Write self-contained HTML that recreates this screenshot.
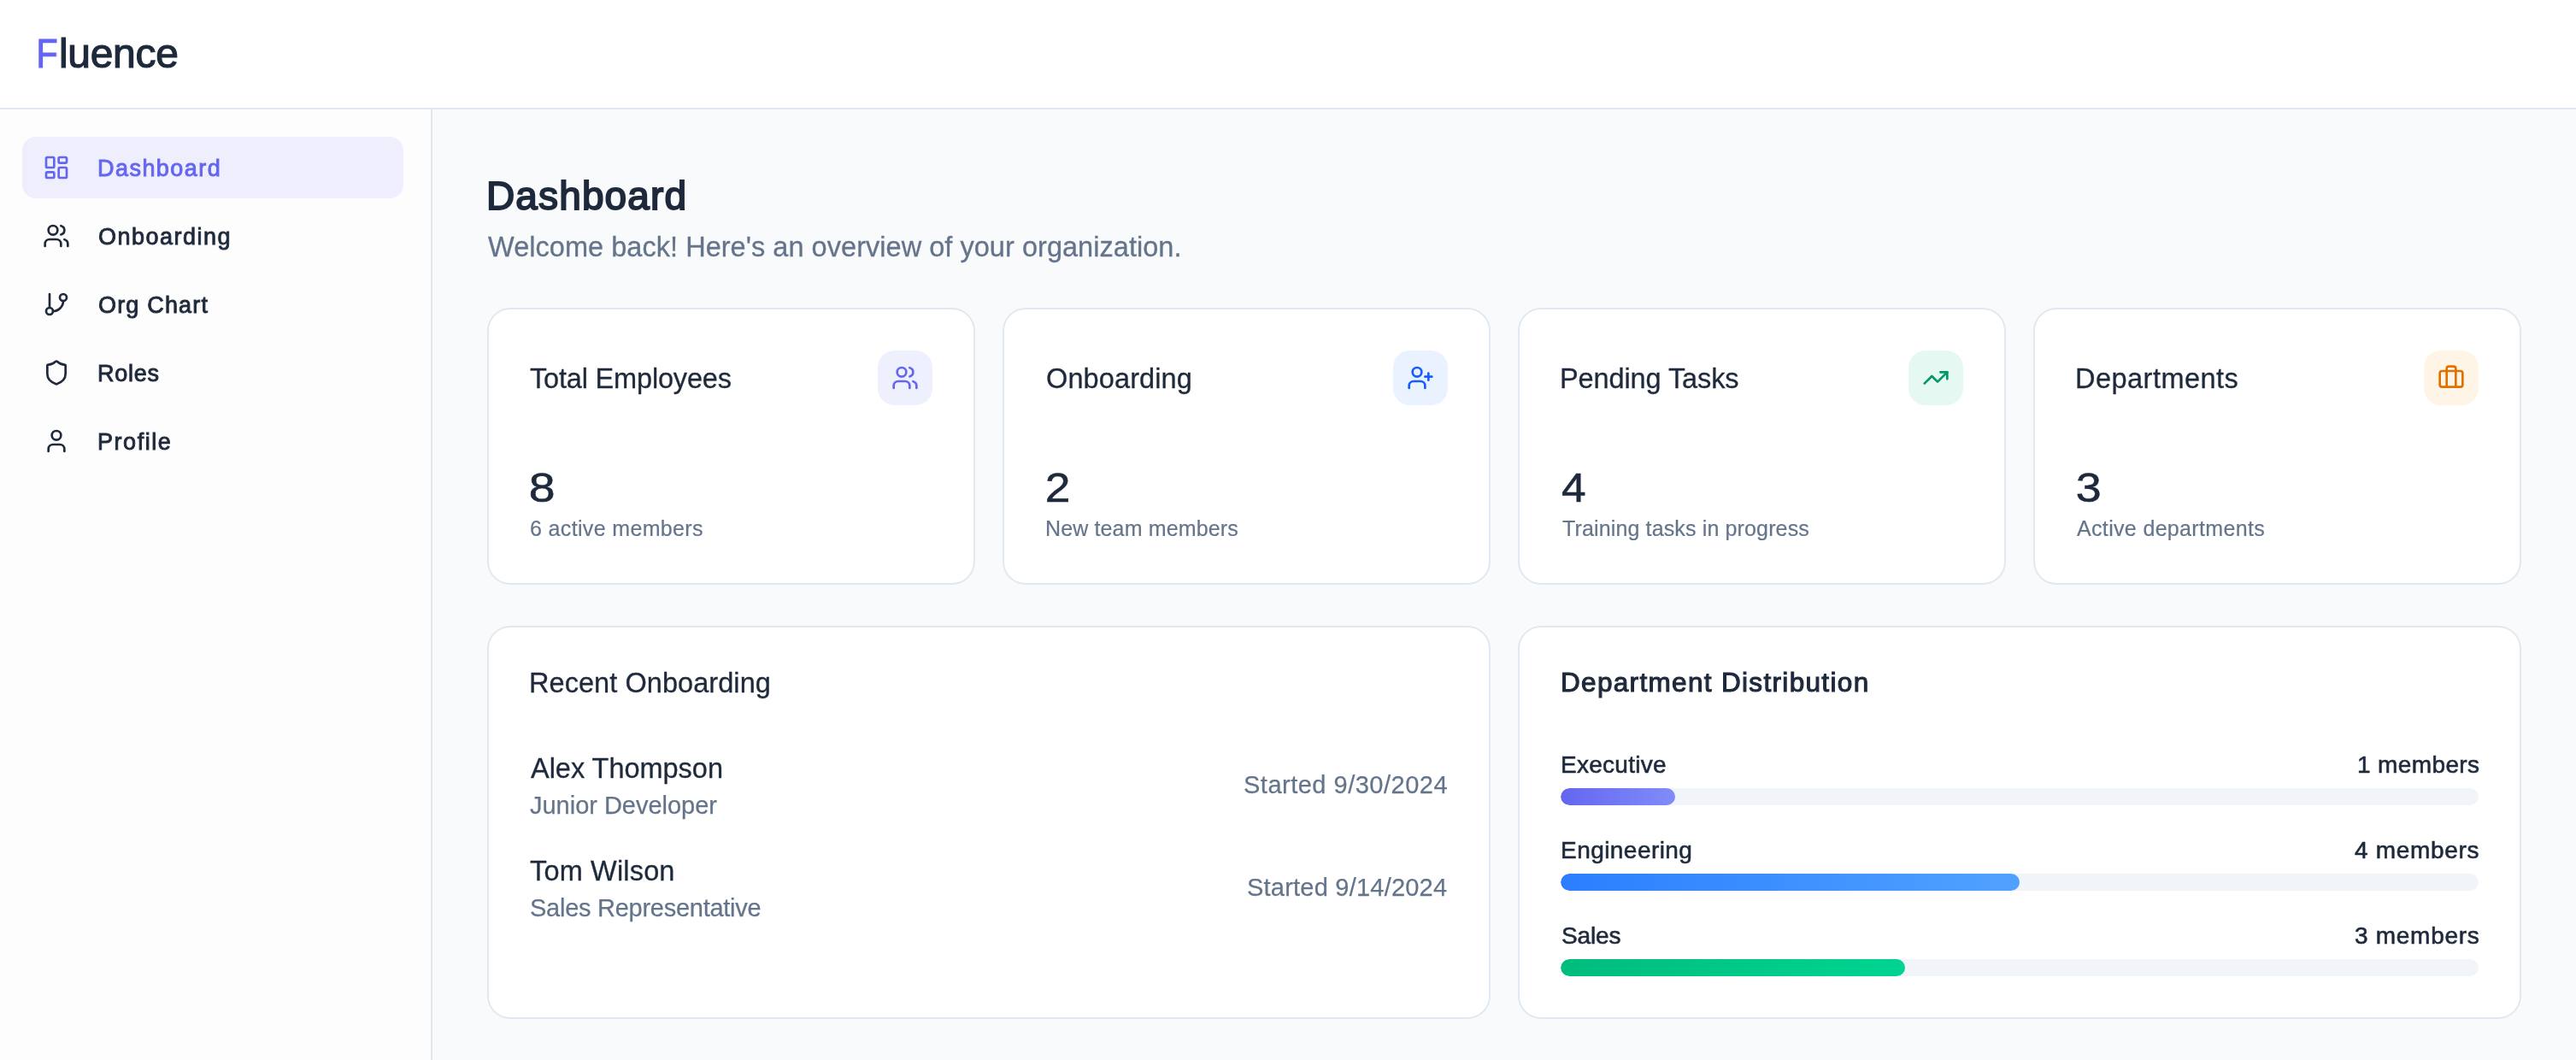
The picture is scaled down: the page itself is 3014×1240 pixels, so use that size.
<!DOCTYPE html><html lang="en"><head><meta charset="utf-8"><title>Fluence - Dashboard</title><style>
*{box-sizing:border-box;margin:0;padding:0}
html,body{width:3014px;height:1240px;overflow:hidden}
body{position:relative;background:#f9fafc;font-family:"Liberation Sans",Arial,sans-serif;color:#1e293b}
.t{position:absolute;white-space:pre;font-weight:400;display:block;will-change:transform}
.ico{position:absolute;display:block}
header{position:absolute;left:0;top:0;width:3014px;height:128px;background:#fff;border-bottom:2px solid #e2e8f0}
aside{position:absolute;left:0;top:128px;width:506px;height:1112px;background:#fdfdfe;border-right:2px solid #e2e8f0}
.navact{position:absolute;left:26px;top:160px;width:446px;height:72px;border-radius:16px;background:#efeefc}
.card{position:absolute;background:#fff;border:2px solid #e2e8f0;border-radius:27px}
.badge{position:absolute;width:64px;height:64px;border-radius:20px;top:410px}
.track{position:absolute;left:1826px;width:1074px;height:20px;border-radius:10px;background:#f1f5f9;overflow:hidden}
.fill{position:absolute;left:0;top:0;height:20px;border-radius:10px}
</style></head><body>
<header><span class="t" id="logoF" style="left:42.00px;top:38.75px;font-size:48.0px;line-height:48.0px;color:#6366f1;letter-spacing:0.000px;-webkit-text-stroke:1.2px #6366f1;transform:scaleX(0.86);transform-origin:3px 0;">F</span><span class="t" id="logo" style="left:68.60px;top:38.75px;font-size:48.0px;line-height:48.0px;color:#1e293b;letter-spacing:-0.320px;-webkit-text-stroke:1.2px #1e293b;">luence</span></header>
<aside></aside>
<nav><div class="navact"></div>
<svg class="ico" style="left:50px;top:180px;color:#6366f1" width="32" height="32" viewBox="0 0 24 24" fill="none" stroke="currentColor" stroke-width="2" stroke-linecap="round" stroke-linejoin="round"><rect width="7" height="9" x="3" y="3" rx="1"/><rect width="7" height="5" x="14" y="3" rx="1"/><rect width="7" height="9" x="14" y="12" rx="1"/><rect width="7" height="5" x="3" y="16" rx="1"/></svg>
<a class="t" id="nav1" style="left:113.60px;top:183.75px;font-size:27px;line-height:27px;color:#6366f1;letter-spacing:1.456px;-webkit-text-stroke:0.9px #6366f1;">Dashboard</a>
<svg class="ico" style="left:50px;top:260px;color:#1e293b" width="32" height="32" viewBox="0 0 24 24" fill="none" stroke="currentColor" stroke-width="2" stroke-linecap="round" stroke-linejoin="round"><path d="M16 21v-2a4 4 0 0 0-4-4H6a4 4 0 0 0-4 4v2"/><circle cx="9" cy="7" r="4"/><path d="M22 21v-2a4 4 0 0 0-3-3.87"/><path d="M16 3.13a4 4 0 0 1 0 7.75"/></svg>
<a class="t" id="nav2" style="left:114.60px;top:263.75px;font-size:27px;line-height:27px;color:#1e293b;letter-spacing:1.489px;-webkit-text-stroke:0.9px #1e293b;">Onboarding</a>
<svg class="ico" style="left:50px;top:340px;color:#1e293b" width="32" height="32" viewBox="0 0 24 24" fill="none" stroke="currentColor" stroke-width="2" stroke-linecap="round" stroke-linejoin="round"><line x1="6" x2="6" y1="3" y2="15"/><circle cx="18" cy="6" r="3"/><circle cx="6" cy="18" r="3"/><path d="M18 9a9 9 0 0 1-9 9"/></svg>
<a class="t" id="nav3" style="left:114.60px;top:343.75px;font-size:27px;line-height:27px;color:#1e293b;letter-spacing:1.175px;-webkit-text-stroke:0.9px #1e293b;">Org Chart</a>
<svg class="ico" style="left:50px;top:420px;color:#1e293b" width="32" height="32" viewBox="0 0 24 24" fill="none" stroke="currentColor" stroke-width="2" stroke-linecap="round" stroke-linejoin="round"><path d="M20 13c0 5-3.5 7.5-7.66 8.95a1 1 0 0 1-.67-.01C7.5 20.500 4 18 4 13V6a1 1 0 0 1 1-1c2 0 4.500-1.200 6.240-2.720a1.170 1.170 0 0 1 1.520 0C14.510 3.810 17 5 19 5a1 1 0 0 1 1 1z"/></svg>
<a class="t" id="nav4" style="left:113.50px;top:423.75px;font-size:27px;line-height:27px;color:#1e293b;letter-spacing:0.750px;-webkit-text-stroke:0.9px #1e293b;">Roles</a>
<svg class="ico" style="left:50px;top:500px;color:#1e293b" width="32" height="32" viewBox="0 0 24 24" fill="none" stroke="currentColor" stroke-width="2" stroke-linecap="round" stroke-linejoin="round"><path d="M19 21v-2a4 4 0 0 0-4-4H9a4 4 0 0 0-4 4v2"/><circle cx="12" cy="7" r="4"/></svg>
<a class="t" id="nav5" style="left:113.50px;top:503.75px;font-size:27px;line-height:27px;color:#1e293b;letter-spacing:1.542px;-webkit-text-stroke:0.9px #1e293b;">Profile</a>
</nav><main>
<h1 class="t" id="h1" style="left:569.00px;top:206.25px;font-size:46px;line-height:46px;color:#1e293b;letter-spacing:1.125px;-webkit-text-stroke:1.9px #1e293b;">Dashboard</h1><p class="t" id="sub" style="left:571.00px;top:273.00px;font-size:32.5px;line-height:32.5px;color:#64748b;letter-spacing:0.038px;-webkit-text-stroke:0.3px #64748b;">Welcome back! Here&#x27;s an overview of your organization.</p>
<section class="card" style="left:570px;top:360px;width:571px;height:324px"></section>
<div class="badge" style="left:1027px;background:#eff0fe"></div>
<svg class="ico" style="left:1043px;top:426px;color:#6366f1" width="32" height="32" viewBox="0 0 24 24" fill="none" stroke="currentColor" stroke-width="2" stroke-linecap="round" stroke-linejoin="round"><path d="M16 21v-2a4 4 0 0 0-4-4H6a4 4 0 0 0-4 4v2"/><circle cx="9" cy="7" r="4"/><path d="M22 21v-2a4 4 0 0 0-3-3.87"/><path d="M16 3.13a4 4 0 0 1 0 7.75"/></svg>
<h3 class="t" id="ct1" style="left:620.00px;top:427.00px;font-size:32.5px;line-height:32.5px;color:#1e293b;letter-spacing:-0.179px;-webkit-text-stroke:0.3px #1e293b;">Total Employees</h3><div class="t" id="n1" style="left:619.00px;top:546.25px;font-size:49px;line-height:49px;color:#1e293b;letter-spacing:0.000px;transform:scaleX(1.130);transform-origin:2px 0;-webkit-text-stroke:0.6px #1e293b;">8</div><p class="t" id="s1" style="left:619.75px;top:606.00px;font-size:25px;line-height:25px;color:#64748b;letter-spacing:0.350px;-webkit-text-stroke:0.2px #64748b;">6 active members</p>
<section class="card" style="left:1173px;top:360px;width:571px;height:324px"></section>
<div class="badge" style="left:1630px;background:#eaf2ff"></div>
<svg class="ico" style="left:1646px;top:426px;color:#155dfc" width="32" height="32" viewBox="0 0 24 24" fill="none" stroke="currentColor" stroke-width="2" stroke-linecap="round" stroke-linejoin="round"><path d="M16 21v-2a4 4 0 0 0-4-4H6a4 4 0 0 0-4 4v2"/><circle cx="9" cy="7" r="4"/><line x1="19" x2="19" y1="8" y2="14"/><line x1="22" x2="16" y1="11" y2="11"/></svg>
<h3 class="t" id="ct2" style="left:1223.50px;top:427.00px;font-size:32.5px;line-height:32.5px;color:#1e293b;letter-spacing:0.111px;-webkit-text-stroke:0.3px #1e293b;">Onboarding</h3><div class="t" id="n2" style="left:1222.50px;top:546.25px;font-size:49px;line-height:49px;color:#1e293b;letter-spacing:0.000px;transform:scaleX(1.087);transform-origin:2px 0;-webkit-text-stroke:0.6px #1e293b;">2</div><p class="t" id="s2" style="left:1222.50px;top:606.00px;font-size:25px;line-height:25px;color:#64748b;letter-spacing:0.133px;-webkit-text-stroke:0.2px #64748b;">New team members</p>
<section class="card" style="left:1776px;top:360px;width:571px;height:324px"></section>
<div class="badge" style="left:2233px;background:#e6f8f2"></div>
<svg class="ico" style="left:2249px;top:426px;color:#009966" width="32" height="32" viewBox="0 0 24 24" fill="none" stroke="currentColor" stroke-width="2" stroke-linecap="round" stroke-linejoin="round"><polyline points="22 7 13.5 15.5 8.5 10.5 2 17"/><polyline points="16 7 22 7 22 13"/></svg>
<h3 class="t" id="ct3" style="left:1825.00px;top:427.00px;font-size:32.5px;line-height:32.5px;color:#1e293b;letter-spacing:-0.104px;-webkit-text-stroke:0.3px #1e293b;">Pending Tasks</h3><div class="t" id="n3" style="left:1826.50px;top:546.25px;font-size:49px;line-height:49px;color:#1e293b;letter-spacing:0.000px;transform:scaleX(1.050);transform-origin:1px 0;-webkit-text-stroke:0.6px #1e293b;">4</div><p class="t" id="s3" style="left:1827.50px;top:606.00px;font-size:25px;line-height:25px;color:#64748b;letter-spacing:0.140px;-webkit-text-stroke:0.2px #64748b;">Training tasks in progress</p>
<section class="card" style="left:2379px;top:360px;width:571px;height:324px"></section>
<div class="badge" style="left:2836px;background:#fff5e6"></div>
<svg class="ico" style="left:2852px;top:426px;color:#e17100" width="32" height="32" viewBox="0 0 24 24" fill="none" stroke="currentColor" stroke-width="2" stroke-linecap="round" stroke-linejoin="round"><path d="M16 20V4a2 2 0 0 0-2-2h-4a2 2 0 0 0-2 2v16"/><rect width="20" height="14" x="2" y="6" rx="2"/></svg>
<h3 class="t" id="ct4" style="left:2427.75px;top:427.00px;font-size:32.5px;line-height:32.5px;color:#1e293b;letter-spacing:0.475px;-webkit-text-stroke:0.3px #1e293b;">Departments</h3><div class="t" id="n4" style="left:2428.75px;top:546.25px;font-size:49px;line-height:49px;color:#1e293b;letter-spacing:0.000px;transform:scaleX(1.098);transform-origin:2px 0;-webkit-text-stroke:0.6px #1e293b;">3</div><p class="t" id="s4" style="left:2430.00px;top:606.00px;font-size:25px;line-height:25px;color:#64748b;letter-spacing:0.338px;-webkit-text-stroke:0.2px #64748b;">Active departments</p>
<section class="card" style="left:570px;top:732px;width:1174px;height:460px"></section>
<section class="card" style="left:1776px;top:732px;width:1174px;height:460px"></section>
<h3 class="t" id="rt1" style="left:619.00px;top:783.00px;font-size:32.5px;line-height:32.5px;color:#1e293b;letter-spacing:0.062px;-webkit-text-stroke:0.3px #1e293b;">Recent Onboarding</h3><h3 class="t" id="rt2" style="left:1825.50px;top:783.00px;font-size:31.5px;line-height:31.5px;color:#1e293b;letter-spacing:1.330px;-webkit-text-stroke:1.1px #1e293b;">Department Distribution</h3>
<span class="t" id="p1" style="left:620.75px;top:882.75px;font-size:32.5px;line-height:32.5px;color:#1e293b;letter-spacing:-0.021px;-webkit-text-stroke:0.3px #1e293b;">Alex Thompson</span>
<span class="t" id="p1r" style="left:620.00px;top:927.75px;font-size:29px;line-height:29px;color:#64748b;letter-spacing:-0.017px;-webkit-text-stroke:0.25px #64748b;">Junior Developer</span>
<span class="t" id="p2" style="left:620.00px;top:1002.75px;font-size:32.5px;line-height:32.5px;color:#1e293b;letter-spacing:0.167px;-webkit-text-stroke:0.3px #1e293b;">Tom Wilson</span>
<span class="t" id="p2r" style="left:620.00px;top:1047.75px;font-size:29px;line-height:29px;color:#64748b;letter-spacing:-0.263px;-webkit-text-stroke:0.25px #64748b;">Sales Representative</span>
<span class="t" id="d1" style="left:1454.50px;top:904.00px;font-size:29px;line-height:29px;color:#64748b;letter-spacing:0.500px;-webkit-text-stroke:0.25px #64748b;">Started 9/30/2024</span>
<span class="t" id="d2" style="left:1459.00px;top:1024.00px;font-size:29px;line-height:29px;color:#64748b;letter-spacing:0.219px;-webkit-text-stroke:0.25px #64748b;">Started 9/14/2024</span>
<span class="t" id="l1" style="left:1825.50px;top:880.75px;font-size:28.0px;line-height:28.0px;color:#1e293b;letter-spacing:0.281px;-webkit-text-stroke:0.6px #1e293b;">Executive</span>
<span class="t" id="l2" style="left:1825.50px;top:980.75px;font-size:28.0px;line-height:28.0px;color:#1e293b;letter-spacing:0.450px;-webkit-text-stroke:0.6px #1e293b;">Engineering</span>
<span class="t" id="l3" style="left:1826.50px;top:1080.75px;font-size:28.0px;line-height:28.0px;color:#1e293b;letter-spacing:-0.125px;-webkit-text-stroke:0.6px #1e293b;">Sales</span>
<span class="t" id="m1" style="left:2757.50px;top:880.75px;font-size:28.0px;line-height:28.0px;color:#1e293b;letter-spacing:0.375px;-webkit-text-stroke:0.6px #1e293b;">1 members</span>
<span class="t" id="m2" style="left:2755.00px;top:980.75px;font-size:28.0px;line-height:28.0px;color:#1e293b;letter-spacing:0.688px;-webkit-text-stroke:0.6px #1e293b;">4 members</span>
<span class="t" id="m3" style="left:2754.75px;top:1080.75px;font-size:28.0px;line-height:28.0px;color:#1e293b;letter-spacing:0.719px;-webkit-text-stroke:0.6px #1e293b;">3 members</span>
<div class="track" style="top:922px"><div class="fill" style="width:134.25px;background:linear-gradient(90deg,#6366f1,#818cf8)"></div></div>
<div class="track" style="top:1022px"><div class="fill" style="width:537px;background:linear-gradient(90deg,#2b7fff,#51a2ff)"></div></div>
<div class="track" style="top:1122px"><div class="fill" style="width:402.75px;background:linear-gradient(90deg,#00bc7d,#00d492)"></div></div>
</main></body></html>
